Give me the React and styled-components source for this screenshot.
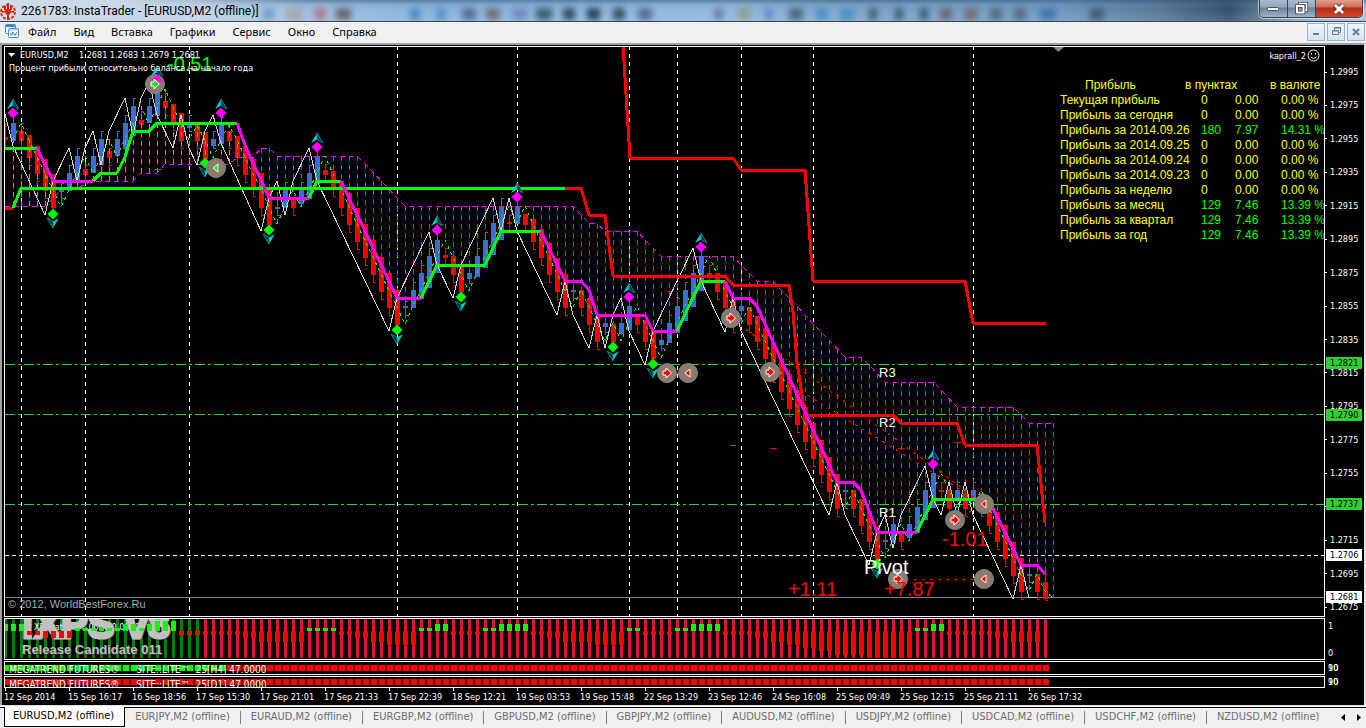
import React from "react";
import styled, { createGlobalStyle, css } from "styled-components";

const uiFont = `"DejaVu Sans Condensed", "Noto Sans", sans-serif`;
const titleFont = `Roboto, "Noto Sans", sans-serif`;
const arial = `"Liberation Sans", Arial, sans-serif`;

const GlobalStyle = createGlobalStyle`
  * { box-sizing: border-box; }
  body { margin: 0; background: #f0f0f0; font-family: ${uiFont}; }
  button { font: inherit; border: 0; padding: 0; background: none; color: inherit; }
`;

/* ---------- data ---------- */

const STEP = 8;
const X0 = 5;
const xAt = (k) => X0 + k * STEP;

// b = rising, r = falling: [kind, body top, body bottom, upper wick, lower wick]
const candles = [
  ["r", 137, 139, 123, 148], ["b", 123, 140, 115], ["r", 131, 140, 123], ["r", 135, 157], ["r", 146, 173],
  ["r", 159, 190], ["r", 174, 207], ["b", 190, 191, 183, 198], ["b", 173, 190], ["b", 156, 181],
  ["r", 169, 174, 165, 181], ["b", 156, 172], ["b", 139, 164], ["r", 151, 157, 148], ["b", 139, 155],
  ["b", 123, 148], ["b", 106, 135], ["r", 120, 124, 111, 131], ["b", 106, 122], ["b", 89, 115],
  ["r", 101, 107, 93, 115], ["r", 104, 122], ["r", 113, 140], ["b", 125, 127, 115, 131], ["r", 125, 140],
  ["r", 132, 158], ["b", 139, 145, 131, 148], ["b", 125, 143], ["r", 131, 140], ["r", 136, 157],
  ["r", 146, 174], ["r", 159, 188], ["r", 173, 207], ["r", 190, 224], ["b", 207, 208, 198, 215],
  ["b", 190, 207], ["r", 200, 207], ["b", 190, 203], ["b", 173, 198], ["b", 156, 183],
  ["r", 170, 174, 164, 181], ["r", 171, 188], ["r", 181, 207], ["r", 193, 224], ["r", 208, 241],
  ["r", 224, 257], ["r", 240, 274], ["r", 257, 291], ["r", 273, 307], ["r", 290, 324],
  ["b", 306, 307, 301, 315], ["b", 290, 307], ["b", 273, 298], ["b", 256, 287], ["b", 240, 272],
  ["r", 255, 257, 248, 264], ["r", 256, 274], ["r", 267, 291], ["b", 273, 278, 265, 283], ["b", 256, 276],
  ["b", 240, 267], ["b", 223, 254], ["b", 206, 239], ["r", 222, 223, 215, 232], ["b", 206, 223],
  ["r", 214, 224], ["r", 219, 241], ["r", 229, 257], ["r", 243, 274], ["r", 258, 291],
  ["r", 274, 307], ["b", 290, 291, 282, 298], ["r", 290, 307], ["r", 298, 324], ["r", 316, 341],
  ["b", 323, 326, 315, 332], ["r", 324, 341], ["b", 323, 333], ["b", 306, 329], ["r", 316, 324],
  ["r", 320, 341], ["r", 331, 358], ["b", 340, 344, 332, 348], ["b", 323, 342], ["b", 306, 332],
  ["b", 290, 320], ["b", 273, 306], ["b", 256, 290], ["r", 273, 274, 265, 281], ["r", 273, 291],
  ["r", 282, 307], ["r", 298, 324], ["b", 306, 310], ["r", 307, 324], ["r", 316, 341],
  ["r", 328, 358], ["r", 342, 374], ["r", 358, 391], ["r", 374, 408], ["r", 390, 424],
  ["r", 407, 441], ["r", 423, 458], ["r", 440, 474], ["r", 457, 491], ["r", 474, 508],
  ["b", 490, 491, 482, 508], ["r", 490, 508], ["r", 499, 525], ["r", 511, 541], ["r", 526, 558],
  ["b", 540, 541, 532, 548], ["b", 524, 542], ["r", 534, 541], ["b", 524, 537], ["b", 507, 532],
  ["b", 490, 519], ["b", 473, 507], ["r", 490, 491, 482, 498], ["r", 490, 508], ["b", 490, 498],
  ["r", 493, 508], ["b", 490, 498], ["r", 493, 508], ["r", 502, 525], ["r", 512, 541],
  ["r", 525, 558], ["r", 542, 575], ["r", 558, 591], ["b", 574, 575, 565, 582], ["r", 574, 591],
  ["r", 582, 598, 574, 600],
];

const LIME = "#00ff00";
const MAG = "#ff00ff";
const RED = "#ff0000";

const fastLine = [
  [LIME, "5,148 37,148"],
  [MAG, "37,148 53,181 93,181"],
  [LIME, "93,181 101,173 117,173 125,157 133,131 149,131 157,123 237,123"],
  [MAG, "237,123 245,145 269,198 309,198"],
  [LIME, "309,198 317,181 341,181"],
  [MAG, "341,181 397,298 421,298"],
  [LIME, "421,298 437,265 485,265 501,231 541,231"],
  [MAG, "541,231 565,281 581,281 589,290 597,315 645,315 653,331 677,331"],
  [LIME, "677,331 701,281 725,281"],
  [MAG, "725,281 733,298 749,298 757,306 773,342 837,482 853,482 861,490 877,532 917,532"],
  [LIME, "917,532 933,499 989,499"],
  [MAG, "989,500 1021,565 1037,565 1045,574"],
];

const slowLine = [
  [RED, "5,208 13,208"],
  [LIME, "13,208 21,188 565,188"],
  [RED, "565,188 581,188 589,215 605,215 613,276 725,276 733,285 789,285 793,312 797,362 805,415 893,415 901,423 957,423 965,445 1037,445 1045,523"],
  [RED, "623,46 630,158 733,158 741,170 805,170 813,281 965,281 973,323 1046,323"],
];

const whiteLine =
  "5,114 13,146 45,215 53,181 69,148 77,181 85,148 93,131 101,165 109,131 125,98 133,135 141,98 149,82 157,115 173,148 181,115 189,148 197,165 205,131 213,115 221,143 261,231 269,198 277,181 285,215 293,181 309,148 317,181 389,331 397,298 429,232 437,265 453,298 461,265 493,198 501,231 509,198 517,231 557,315 565,281 573,315 589,348 597,315 605,348 613,315 621,298 629,331 645,365 653,331 693,248 701,281 725,332 733,298 741,331 829,515 837,482 845,515 869,565 877,532 885,515 893,548 901,515 925,466 933,499 941,515 949,482 957,515 965,482 973,515 1013,599 1021,565 1029,598 1037,597";

const cloud = [
  [5, 206], [45, 206], [61, 190], [77, 188], [93, 181], [133, 181], [141, 173], [157, 173], [165, 164], [229, 164],
  [237, 158], [253, 157], [261, 148], [269, 148], [277, 156], [357, 156], [365, 164], [389, 189], [397, 198],
  [405, 206], [573, 206], [581, 215], [589, 223], [597, 224], [605, 231], [637, 231], [645, 240], [661, 256],
  [733, 256], [741, 265], [757, 281], [773, 281], [781, 290], [797, 306], [805, 315], [813, 324], [829, 340],
  [845, 357], [861, 357], [869, 365], [885, 382], [933, 382], [941, 390], [957, 407], [1013, 407], [1021, 415],
  [1029, 423], [1053, 423],
];

const cloudAt = (x) => {
  for (let i = 1; i < cloud.length; i++) {
    const [ax, ay] = cloud[i - 1];
    const [bx, by] = cloud[i];
    if (x <= bx) return Math.round(ay + ((by - ay) * (x - ax)) / (bx - ax));
  }
  return cloud[cloud.length - 1][1];
};

const closeLine = candles.map(([kind, top, bottom], k) => [xAt(k + 1), kind === "b" ? top : bottom]);

const dayBreaks = [21, 85, 189, 397, 517, 629, 677, 741, 813, 973];
const peaks = [[13, 113], [157, 80], [221, 113], [317, 147], [437, 230], [517, 197], [629, 297], [701, 247], [933, 464]];
const troughs = [[53, 214], [205, 163], [269, 230], [397, 330], [461, 297], [613, 347], [653, 364], [877, 564]];
const trades = [
  [155, 84, "in", LIME], [216, 168, "out", LIME], [667, 373, "in", RED], [688, 373, "out", RED],
  [731, 318, "in", RED], [770, 372, "in", RED], [955, 520, "in", RED], [984, 504, "out", RED],
  [898, 579, "in", RED], [984, 579, "out", RED],
];

// run-length list: [count, top, bottom]; falling values start at 631
const oscRuns = [
  [3, 624, 631], [2, 631, 635], [4, 631, 638], [6, 628, 631], [2, 624, 631], [1, 628, 631], [1, 624, 631],
  [3, 621, 631], [8, 631, 635], [2, 631, 638], [6, 631, 642], [4, 628, 631], [2, 631, 635], [2, 631, 638],
  [2, 631, 642], [4, 631, 645], [2, 628, 631], [2, 624, 631], [4, 631, 635], [2, 628, 631], [4, 624, 631],
  [2, 631, 635], [2, 631, 638], [4, 631, 642], [4, 631, 645], [2, 628, 631], [4, 631, 635], [2, 628, 631],
  [4, 624, 631], [4, 631, 635], [2, 631, 638], [2, 631, 642], [2, 631, 645], [2, 631, 648], [2, 631, 651],
  [4, 631, 655], [6, 631, 658], [2, 628, 631], [2, 624, 631], [6, 631, 635], [2, 631, 638], [4, 631, 642],
];
const osc = oscRuns.flatMap(([n, top, bottom]) => Array.from({ length: n }, () => [top, bottom]));

const scale = ["1.2995", "1.2975", "1.2955", "1.2935", "1.2915", "1.2895", "1.2875", "1.2855", "1.2835", "1.2815", "1.2795", "1.2775", "1.2755", "1.2735", "1.2715", "1.2695", "1.2675"];
const tags = [["1.2821", true], ["1.2790", true], ["1.2737", true], ["1.2706", false], ["1.2681", false]];
const tagTop = (price) => Math.round(((1.2995 - Number(price)) / 0.032) * 534) + 21;

const times = ["12 Sep 2014", "15 Sep 16:17", "16 Sep 18:56", "17 Sep 15:30", "17 Sep 21:01", "17 Sep 21:33", "17 Sep 22:39", "18 Sep 12:21", "19 Sep 03:53", "19 Sep 15:48", "22 Sep 13:29", "23 Sep 12:46", "24 Sep 16:08", "25 Sep 09:49", "25 Sep 12:15", "25 Sep 21:11", "26 Sep 17:32"];
const menus = ["Файл", "Вид", "Вставка", "Графики", "Сервис", "Окно", "Справка"];
const tabs = ["EURUSD", "EURJPY", "EURAUD", "EURGBP", "GBPUSD", "GBPJPY", "AUDUSD", "USDJPY", "USDCAD", "USDCHF", "NZDUSD"];

const profits = [
  ["Текущая прибыль", "0", "0.00", "0.00 %"],
  ["Прибыль за сегодня", "0", "0.00", "0.00 %"],
  ["Прибыль за 2014.09.26", "180", "7.97", "14.31 %"],
  ["Прибыль за 2014.09.25", "0", "0.00", "0.00 %"],
  ["Прибыль за 2014.09.24", "0", "0.00", "0.00 %"],
  ["Прибыль за 2014.09.23", "0", "0.00", "0.00 %"],
  ["Прибыль за неделю", "0", "0.00", "0.00 %"],
  ["Прибыль за месяц", "129", "7.46", "13.39 %"],
  ["Прибыль за квартал", "129", "7.46", "13.39 %"],
  ["Прибыль за год", "129", "7.46", "13.39 %"],
];

// things seen through the glass title bar: [x, width, colour]
const glass = [
  [262, 12, "#4f86bd"], [286, 16, "#a39c9c"], [314, 12, "#b06f7d"], [336, 15, "#5a5551"], [410, 10, "#3f80b8"],
  [436, 10, "#4a8ac0"], [462, 14, "#4c5f86"], [486, 14, "#6a625f"], [512, 16, "#6f83bd"], [536, 16, "#2f4657"],
  [563, 12, "#1b3444"], [587, 13, "#142735"], [613, 12, "#1e3a4b"], [638, 14, "#4b5a7e"], [714, 9, "#6a6aa8"],
  [738, 12, "#8b9d76"], [765, 8, "#5b80c0"], [789, 14, "#3c566b"], [816, 12, "#3f8ec2"], [840, 14, "#3f8ec2"],
  [869, 8, "#30485a"], [895, 8, "#30485a"], [920, 8, "#30485a"], [940, 12, "#6c5c60"], [965, 12, "#775f5c"],
  [990, 12, "#4b6072"], [1014, 12, "#4b6072"], [1040, 16, "#3b6fae"], [1090, 14, "#3c4f63"],
];

/* ---------- window chrome ---------- */

const Page = styled.div`
  display: flex;
  flex-direction: column;
  min-height: 100vh;
  min-width: 0;
`;

const TitleBar = styled.header`
  position: relative;
  display: flex;
  align-items: center;
  height: 22px;
  flex: none;
  overflow: hidden;
  border-bottom: 1px solid #3c4650;
  background: linear-gradient(90deg, #cfdce9 0, #c3d5e7 200px, #9fbfdf 300px, #88b2dc 420px, #90b8de 720px, #7ba3c8 860px, #6f98c0 1060px, #587896 1160px, #34516b 1230px, #90aac3 1300px, #a9c0d6 100%);
`;

const GlassShade = styled.div`
  position: absolute;
  inset: 0;
  overflow: hidden;
  background: linear-gradient(180deg, rgba(50, 84, 116, 0.55) 0, rgba(90, 130, 165, 0.15) 5px, transparent 9px, rgba(255, 255, 255, 0.12) 100%);
  mask-image: linear-gradient(90deg, transparent 120px, #000 320px);
`;

const GlassBlob = styled.span`
  position: absolute;
  top: 8px;
  height: 12px;
  filter: blur(3px);
  opacity: 0.8;
`;

const AppTitle = styled.h1`
  position: relative;
  display: flex;
  align-items: center;
  gap: 4px;
  flex: 1;
  margin: 0;
  font: 400 12px/20px ${titleFont};
  color: #000;
  white-space: pre;
`;

const WindowButtons = styled.div`
  position: relative;
  display: flex;
  align-self: flex-start;
  height: 18px;
  margin-right: 3px;
  border: 1px solid #3a4450;
  border-top: 0;
  border-radius: 0 0 5px 5px;
  overflow: hidden;
  box-shadow: 0 0 0 1px rgba(255, 255, 255, 0.5);
`;

const WindowButton = styled.button`
  display: grid;
  place-items: center;
  width: ${(p) => (p.$close ? 46 : 28)}px;
  height: 17px;
  border-right: ${(p) => (p.$close ? "0" : "1px solid #3a4450")};
  background: ${(p) =>
    p.$close
      ? "linear-gradient(180deg, #e0a090 0, #cf6a55 7px, #b82c14 8px, #d04a2c 100%)"
      : "linear-gradient(180deg, #a9bccd 0, #8fa6bb 7px, #6c8299 8px, #9fb3c5 100%)"};
`;

const MenuBar = styled.nav`
  display: flex;
  align-items: center;
  height: 21px;
  flex: none;
  padding: 0 0 2px 4px;
  background: #f0f0f0;
`;

const MenuButton = styled.button`
  padding: 0 8px 0 9px;
  font: 11px/18px "Noto Sans", sans-serif;
  color: #000;
`;

const MenuIcon = styled.svg`
  flex: none;
`;

const MdiButtons = styled.div`
  display: flex;
  gap: 2px;
  margin-left: auto;
  margin-right: 1px;
`;

const MdiButton = styled.button`
  display: grid;
  place-items: center;
  width: 18px;
  height: 18px;
  border: 1px solid #9fb4cb;
  background: linear-gradient(180deg, #edf5fd, #d5e4f3);
`;

/* ---------- chart workspace ---------- */

const Workspace = styled.main`
  display: flex;
  flex-direction: column;
  flex: 1;
  gap: 1px;
  padding: 1px 0 0 2px;
  color: #fff;
  background: #000;
  border: solid #a0a0a0;
  border-width: 2px 2px 0;
  border-right-color: #e3e3e3;
`;

const PaneRow = styled.section`
  display: grid;
  grid-template-columns: minmax(0, 1fr) 39px;
  flex: ${(p) => (p.$grow ? "1 0 auto" : "none")};
  height: ${(p) => (p.$grow ? "auto" : `${p.$height}px`)};
  min-height: ${(p) => p.$height}px;
`;

const Plot = styled.div`
  position: relative;
  overflow: hidden;
  border: 1px solid #fff;
`;

const Drawing = styled.svg`
  position: absolute;
  inset: 0;
  width: 100%;
  height: 100%;
`;

const chartText = css`
  font: 9px/12px ${uiFont};
  color: #fff;
`;

const PriceScale = styled.div`
  position: relative;
  display: flex;
  flex-direction: column;
  justify-content: space-between;
  padding: ${(p) => p.$pad};
  ${chartText}
  ${(p) => p.$stacked && css`
    display: grid;
    justify-content: start;
    > * { grid-area: 1 / 1; }
  `}
`;

const ScaleLabel = styled.span`
  display: flex;
  align-items: center;
  gap: 3px;
  height: 12px;
  &::before {
    content: "";
    width: ${(p) => (p.$plain ? 0 : 2)}px;
    height: 1px;
    background: #fff;
  }
`;

const PriceTag = styled.span`
  position: absolute;
  left: 1px;
  right: 2px;
  height: 12px;
  padding-left: 4px;
  color: #000;
  background: ${(p) => (p.$level ? "#32cd32" : "#fff")};
`;

const ChartHeader = styled.div`
  position: absolute;
  top: 2px;
  left: 3px;
  ${chartText}
  white-space: pre;
`;

const Quote = styled.div`
  display: flex;
  align-items: center;
  gap: 4px;
`;

const Note = styled.p`
  margin: 1px 0 0 1px;
`;

const Expert = styled.div`
  position: absolute;
  top: 2px;
  right: 4px;
  display: flex;
  align-items: center;
  gap: 1px;
  ${chartText}
`;

const ProfitTable = styled.table`
  position: absolute;
  top: 31px;
  right: 0;
  width: 264px;
  table-layout: fixed;
  border-collapse: collapse;
  font: 12px/15px ${arial};
  color: #ffff00;
  white-space: nowrap;
  th, td { padding: 0; text-align: left; font-weight: 400; }
`;

const HeadCell = styled.th`
  && { padding-left: ${(p) => (p.$indent ? 25 : 0)}px; }
`;

const ValueCell = styled.td`
  color: ${(p) => (p.$gain ? LIME : "inherit")};
`;

const Copyright = styled.span`
  position: absolute;
  left: 3px;
  bottom: 5px;
  font: 11px/14px ${arial};
  color: #a9a9a9;
`;

const PaneCaption = styled.span`
  position: absolute;
  top: 2px;
  left: ${(p) => p.$left}px;
  ${chartText}
  font-size: ${(p) => (p.$small ? 9 : 10)}px;
  white-space: pre;
`;

const Watermark = styled.div`
  position: absolute;
  top: -15px;
  left: 16px;
  font: 700 40px/40px ${arial};
  color: #c0c0c0;
  text-shadow: 2px 2px 0 #333;
  -webkit-text-stroke: 3px #c0c0c0;
`;

const WatermarkNote = styled.div`
  position: absolute;
  top: 23px;
  left: 17px;
  font: 700 13px/15px ${arial};
  color: #c0c0c0;
  text-shadow: 1px 1px 0 #333;
`;

const TimeAxis = styled.div`
  display: flex;
  height: 17px;
  overflow: hidden;
  margin-top: -1px;
  ${chartText}
`;

const TimeLabel = styled.span`
  flex: 0 0 64px;
  white-space: nowrap;
  &::before {
    content: "";
    display: block;
    width: 1px;
    height: 3px;
    margin-left: 1px;
    background: #fff;
  }
`;

const TabStrip = styled.footer`
  display: flex;
  align-items: flex-start;
  height: 23px;
  flex: none;
  padding: 1px 5px 0 4px;
  border-top: 1px solid #e3e3e3;
  background: linear-gradient(180deg, #fff 1px, #000 1px, #000 2px, #f0f0f0 2px);
`;

const Tab = styled.button`
  flex: none;
  height: 20px;
  padding: 0 10px ${(p) => (p.$active ? 2 : 1)}px ${(p) => (p.$active ? 8 : 10)}px;
  font-size: 11px;
  line-height: 17px;
  color: ${(p) => (p.$active ? "#000" : "#6d6d6d")};
  ${(p) => p.$active && css`
    background: #fff;
    border: solid #000;
    border-width: 0 1px 1px;
  `}
`;

const Divider = styled.span`
  width: 1px;
  height: 13px;
  margin-top: 4px;
  background: #808080;
`;

const TabArrows = styled.div`
  display: flex;
  gap: 12px;
  margin: 7px 0 0 auto;
`;

const ArrowButton = styled.button`
  width: 4px;
  height: 7px;
  display: flex;
`;

/* ---------- drawings ---------- */

const Logo = () => (
  <svg width="17" height="20" viewBox="0 0 17 20" aria-hidden="true">
    <g fill="none" stroke="#d8200f" strokeWidth="2">
      <circle cx="8" cy="11" r="7" strokeDasharray="3 1.4" strokeWidth="1.800" />
      <path d="M8 2v17M5 5v3l3 3l3 -3V5M2 11l3 -1l3 4l3 -4l3 1" />
    </g>
  </svg>
);

const ChartIcon = () => (
  <MenuIcon width="15" height="15" viewBox="0 0 15 15" aria-hidden="true">
    <rect x="1.5" y=".5" width="10" height="9" rx="1" fill="#fff" stroke="#3f8ad0" />
    <path d="M2 2h9" stroke="#3f8ad0" strokeWidth="2" />
    <rect x="4.500" y="4.500" width="10" height="9" rx="1" fill="#fff" stroke="#3f8ad0" />
    <path d="M5 6h9" stroke="#8fc0ea" strokeWidth="1" />
    <path d="M6 9l1.500 2.500L9 8l2 3.500L13 8" fill="none" stroke="#3f8ad0" />
  </MenuIcon>
);

const Candle = ({ k, kind, top, bottom, up, down }) => {
  const x = xAt(k);
  const color = kind === "b" ? "#4169e1" : RED;
  const wickTop = up ?? (kind === "b" ? top - 8 : top);
  const wickBottom = down ?? (kind === "r" ? bottom + 8 : bottom);
  return (
    <g fill={color}>
      <rect x={x} y={wickTop} width="1" height={wickBottom - wickTop} />
      <rect x={x - 2} y={top} width="5" height={bottom - top + 1} />
      {wickTop < top && <rect x={x} y={wickTop} width="3" height="1" />}
      {wickBottom > bottom && <rect x={x} y={wickBottom} width="3" height="1" />}
    </g>
  );
};

const Peak = ({ x, y }) => (
  <g>
    <path d={`M${x} ${y - 5.5}l5.500 5.500l-5.500 5.500l-5.500 -5.500z`} fill={MAG} />
    <path d={`M${x} ${y - 14}l-6 10l6 -3.500z`} fill="#00ced1" />
    <path d={`M${x} ${y - 14}l6 10l-6 -3.500z`} fill="#06262c" stroke="#008b9b" strokeWidth="1" />
  </g>
);

const Trough = ({ x, y }) => (
  <g>
    <path d={`M${x} ${y - 5.5}l5.500 5.500l-5.500 5.500l-5.500 -5.500z`} fill={LIME} />
    <path d={`M${x} ${y + 14}l6 -10l-6 3.500z`} fill="#00ced1" />
    <path d={`M${x} ${y + 14}l-6 -10l6 3.500z`} fill="#06262c" stroke="#008b9b" strokeWidth="1" />
  </g>
);

const TradeArrow = ({ x, y, kind, color }) =>
  kind === "in" ? (
    <path d={`M${x - 4} ${y - 2}h3v-3l5.500 5l-5.500 5v-3h-3z`} fill={color} stroke="#fff" />
  ) : (
    <path d={`M${x + 2} ${y - 4}v8l-5 -4z`} fill={color} stroke="#fff" />
  );

const DayBreaks = () => (
  <g stroke="#fff" strokeDasharray="4 4">
    {dayBreaks.map((x) => <path key={x} d={`M${x + 0.5} 46V1200`} />)}
  </g>
);

const MainDrawing = () => (
  <Drawing aria-label="EURUSD,M2">
    <g transform="translate(-5 -47)">
      <g shapeRendering="crispEdges">
        <DayBreaks />
        <g stroke="#32cd32" strokeDasharray="10 3 3 3">
          {[364, 414, 504].map((y) => <path key={y} d={`M5 ${y + 0.5}H4000`} />)}
        </g>
        <path d="M5 555.500H4000" stroke="#fff" strokeDasharray="4 3" />
        <path d="M5 597.500H4000" stroke="#778899" />
        {candles.map(([kind, top, bottom, up, down], k) => (
          <Candle key={k} k={k} kind={kind} top={top} bottom={bottom} up={up} down={down} />
        ))}
        <g strokeDasharray="5 4" fill="none">
          {closeLine.map(([x, y]) => (
            <path key={x} d={`M${x + 0.5} ${cloudAt(x)}V${y}`} stroke={cloudAt(x) > y ? LIME : MAG} />
          ))}
          <polyline points={cloud.map((p) => p.join()).join(" ")} stroke={MAG} />
          <polyline points={closeLine.map((p) => p.join()).join(" ")} stroke={LIME} strokeDasharray="3 4" />
          <g stroke={RED} strokeDasharray="3 5">
            <path d="M733 320L984 504M773 374L984 504M667 373H688M898 579H984M955 520L984 504" />
          </g>
        </g>
        <path d="M667 291h6M770 448h7M898 448h7M954 442h7" stroke={RED} />
        <path d="M730 445h6M154 169h8" stroke="#228b22" />
        <polyline points={whiteLine} fill="none" stroke="#d3d3d3" />
        <g fill="none" strokeWidth="3" strokeLinejoin="round">
          {slowLine.map(([color, points]) => <polyline key={points} points={points} stroke={color} />)}
          {fastLine.map(([color, points]) => <polyline key={points} points={points} stroke={color} />)}
        </g>
      </g>
      {troughs.map(([x, y]) => <Trough key={x} x={x} y={y} />)}
      {trades.map(([x, y]) => (
        <circle key={`${x}-${y}`} cx={x} cy={y} r="9.500" fill="#8c7b6b" stroke="#778899" />
      ))}
      {peaks.map(([x, y]) => <Peak key={x} x={x} y={y} />)}
      {trades.map(([x, y, kind, color]) => <TradeArrow key={`${x}-${y}`} x={x} y={y} kind={kind} color={color} />)}
      <path d="M1053 47h11l-5.500 5z" fill="#778899" />
      <g fontFamily={arial} fontSize="20" fill={RED}>
        <text x="167" y="71" fill={LIME}>-0.51</text>
        <text x="788" y="596">+1.11</text>
        <text x="884" y="596">+7.87</text>
        <text x="942" y="546">-1.01</text>
        <text x="864" y="574" fill="#fff">Pivot</text>
      </g>
      <g fontFamily={arial} fontSize="13" fill="#fff">
        <text x="879" y="377">R3</text>
        <text x="879" y="427">R2</text>
        <text x="879" y="517">R1</text>
      </g>
    </g>
  </Drawing>
);

const OscBars = () => (
  <Drawing shapeRendering="crispEdges" aria-hidden="true">
    <g transform="translate(-5 -619)">
      <DayBreaks />
      {candles.map((_, k) => (
        <rect key={k} x={xAt(k) - 1} y="619" width="3" height="39" fill={k < 25 ? "#008000" : "#dc143c"} />
      ))}
    </g>
  </Drawing>
);

const OscValues = () => (
  <Drawing shapeRendering="crispEdges" aria-hidden="true">
    <g transform="translate(-5 -619)">
      {osc.slice(0, 130).map(([top, bottom], k) => (
        <rect key={k} x={xAt(k) - 2} y={top} width="5" height={bottom - top} fill={bottom === 631 ? LIME : RED} />
      ))}
    </g>
  </Drawing>
);

const TrendSquares = ({ limeCount, top }) => (
  <Drawing shapeRendering="crispEdges" aria-hidden="true">
    <g transform="translate(-5 0)">
      <DayBreaks />
      {candles.map((_, k) => (
        <g key={k}>
          <rect x={xAt(k) - 4} y={top} width="8" height="6" fill={k < limeCount ? "#004000" : "#700000"} />
          <rect x={xAt(k) - 2} y={top} width="6" height="6" fill={k < limeCount ? LIME : RED} />
        </g>
      ))}
    </g>
  </Drawing>
);

const Smiley = () => (
  <svg width="13" height="13" viewBox="0 0 13 13" fill="none" stroke="#fff" aria-hidden="true">
    <circle cx="6.500" cy="6.500" r="5.500" />
    <path d="M4.500 4v1.500M8.500 4v1.500M3.500 8q3 3 6 0" />
  </svg>
);

export default function App() {
  return (
    <Page>
      <GlobalStyle />
      <TitleBar>
        <GlassShade>
          {glass.map(([x, w, color]) => (
            <GlassBlob key={x} style={{ left: x, width: w, background: color }} />
          ))}
        </GlassShade>
        <AppTitle><Logo />2261783: InstaTrader - [EURUSD,M2 (offline)]</AppTitle>
        <WindowButtons>
          <WindowButton aria-label="Свернуть">
            <svg width="13" height="6"><rect x=".5" y="1.500" width="11" height="3" rx="1" fill="#fff" stroke="#4a5560" /></svg>
          </WindowButton>
          <WindowButton aria-label="Восстановить">
            <svg width="13" height="13" fill="none">
              <path d="M4.500 1.500h7v7h-7z" stroke="#3c4650" strokeWidth="3" /><path d="M4.500 1.500h7v7h-7z" stroke="#fff" strokeWidth="1.500" />
              <path d="M2 4h6.500v6.500h-6.500z" fill="#8298ad" stroke="#3c4650" strokeWidth="3.500" /><path d="M2 4h6.500v6.500h-6.500z" stroke="#fff" strokeWidth="2" />
            </svg>
          </WindowButton>
          <WindowButton $close aria-label="Закрыть">
            <svg width="14" height="12" fill="none">
              <path d="M3 2l8 8M11 2l-8 8" stroke="#5a2a28" strokeWidth="5" /><path d="M3 2l8 8M11 2l-8 8" stroke="#fff" strokeWidth="3" />
            </svg>
          </WindowButton>
        </WindowButtons>
      </TitleBar>
      <MenuBar>
        <ChartIcon />
        {menus.map((name) => <MenuButton key={name}>{name}</MenuButton>)}
        <MdiButtons>
          <MdiButton aria-label="Свернуть окно"><svg width="8" height="8"><path d="M1 6h6" stroke="#6b7f93" strokeWidth="2" /></svg></MdiButton>
          <MdiButton aria-label="Восстановить окно">
            <svg width="9" height="9" fill="none" stroke="#6b7f93"><path d="M2.500 3V.5h6v5H6.500M2.500 1h6M.5 3.500h6v4h-6zM.5 4h6" /></svg>
          </MdiButton>
          <MdiButton aria-label="Закрыть окно"><svg width="8" height="8"><path d="M1 1l6 6M7 1l-6 6" stroke="#6b7f93" strokeWidth="2" /></svg></MdiButton>
        </MdiButtons>
      </MenuBar>

      <Workspace>
        <PaneRow $grow $height={571}>
          <Plot>
            <MainDrawing />
            <ChartHeader>
              <Quote>
                <svg width="8" height="4" aria-hidden="true"><path d="M0 0h7l-3.500 4z" fill="#fff" /></svg>
                {"EURUSD,M2    1.2681 1.2683 1.2679 1.2681"}
              </Quote>
              <Note>Процент прибыли относительно баланса на начало года</Note>
            </ChartHeader>
            <Expert>kaprall_2<Smiley /></Expert>
            <ProfitTable>
              <colgroup>
                {[125, 16, 34, 35, 11, 43].map((w, i) => <col key={i} width={w} />)}
              </colgroup>
              <thead>
                <tr><HeadCell $indent>Прибыль</HeadCell><HeadCell colSpan={3}>в пунктах</HeadCell><HeadCell colSpan={2}>в валюте</HeadCell></tr>
              </thead>
              <tbody>
                {profits.map(([name, pts, lots, pct]) => (
                  <tr key={name}>
                    <td colSpan={2}>{name}</td>
                    <ValueCell $gain={pts !== "0"}>{pts}</ValueCell>
                    <ValueCell $gain={pts !== "0"} colSpan={2}>{lots}</ValueCell>
                    <ValueCell $gain={pts !== "0"}>{pct}</ValueCell>
                  </tr>
                ))}
              </tbody>
            </ProfitTable>
            <Copyright>© 2012, WorldBestForex.Ru</Copyright>
          </Plot>
          <PriceScale $pad="20px 0 4px">
            {scale.map((price) => <ScaleLabel key={price}>{price}</ScaleLabel>)}
            {tags.map(([price, level]) => (
              <PriceTag key={price} $level={level} style={{ top: tagTop(price) }}>{price}</PriceTag>
            ))}
          </PriceScale>
        </PaneRow>

        <PaneRow $height={42}>
          <Plot>
            <OscBars />
            <PaneCaption $small $left={29}>XPSdata 4, 0.0000,0.0000</PaneCaption>
            <Watermark>!XPS v8</Watermark>
            <WatermarkNote>Release Candidate 011</WatermarkNote>
            <OscValues />
          </Plot>
          <PriceScale $pad="2px 0 1px"><ScaleLabel $plain>1</ScaleLabel><ScaleLabel $plain>0</ScaleLabel></PriceScale>
        </PaneRow>

        <PaneRow $height={14}>
          <Plot>
            <TrendSquares limeCount={28} top={3} />
            <PaneCaption $left={4}>{"MEGATREND FUTURES®      SITE::LITE™  25[H4] 47.0000"}</PaneCaption>
          </Plot>
          <PriceScale $pad="1px 0 0" $stacked><ScaleLabel $plain>10</ScaleLabel><ScaleLabel $plain>90</ScaleLabel></PriceScale>
        </PaneRow>

        <PaneRow $height={12}>
          <Plot>
            <TrendSquares limeCount={0} top={2} />
            <PaneCaption $left={4}>{"MEGATREND FUTURES®      SITE::LITE™  25[D1] 47.0000"}</PaneCaption>
          </Plot>
          <PriceScale $pad="0" $stacked><ScaleLabel $plain>10</ScaleLabel><ScaleLabel $plain>90</ScaleLabel></PriceScale>
        </PaneRow>

        <TimeAxis>
          {times.map((t) => <TimeLabel key={t}>{t}</TimeLabel>)}
        </TimeAxis>
      </Workspace>

      <TabStrip>
        {tabs.map((name, i) => (
          <React.Fragment key={name}>
            {i > 1 && <Divider />}
            <Tab $active={i === 0}>{name},M2 (offline)</Tab>
          </React.Fragment>
        ))}
        <TabArrows>
          <ArrowButton aria-label="Назад"><svg width="4" height="7"><path d="M4 0v7L0 3.500z" /></svg></ArrowButton>
          <ArrowButton aria-label="Вперёд"><svg width="4" height="7"><path d="M0 0v7l4-3.500z" /></svg></ArrowButton>
        </TabArrows>
      </TabStrip>
    </Page>
  );
}
